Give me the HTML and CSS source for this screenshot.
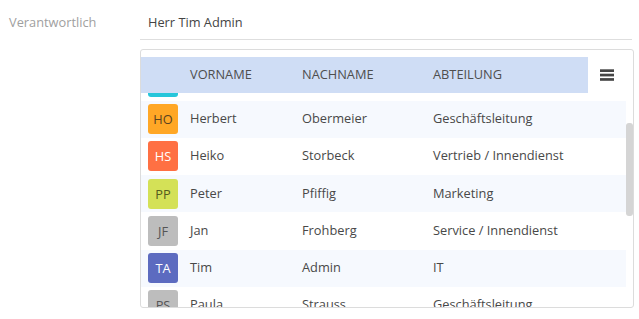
FILE: index.html
```html
<!DOCTYPE html>
<html lang="de">
<head>
<meta charset="utf-8">
<title>Verantwortlich</title>
<link rel="stylesheet" href="styles.css">
</head>
<body>
<div class="field">
  <div class="field-label">Verantwortlich</div>
  <div class="field-main">
    <div class="field-value">Herr Tim Admin</div>
    <div class="grid">
      <div class="grid-head">
        <div class="head-row">
          <div></div>
          <div class="cell">VORNAME</div>
          <div class="cell">NACHNAME</div>
          <div class="cell">ABTEILUNG</div>
        </div>
        <button class="menu" aria-label="Menü">
          <svg width="14" height="12" viewBox="0 0 14 12"><rect x="0" y="0.3" width="14" height="2.7" fill="#454545"/><rect x="0" y="4.7" width="14" height="2.7" fill="#454545"/><rect x="0" y="9.1" width="14" height="2.7" fill="#454545"/></svg>
        </button>
      </div>
      <div class="body-wrap">
        <div class="grid-body" id="gridBody">
          <div class="row"><span class="av av-green">MK</span><span class="cell">Markus</span><span class="cell">Kaiser</span><span class="cell">Vertrieb</span></div>
          <div class="row"><span class="av av-cyan">AB</span><span class="cell">Anna</span><span class="cell">Berger</span><span class="cell">Buchhaltung</span></div>
          <div class="row"><span class="av av-orange">HO</span><span class="cell">Herbert</span><span class="cell">Obermeier</span><span class="cell">Geschäftsleitung</span></div>
          <div class="row"><span class="av av-deep">HS</span><span class="cell">Heiko</span><span class="cell">Storbeck</span><span class="cell">Vertrieb / Innendienst</span></div>
          <div class="row"><span class="av av-lime">PP</span><span class="cell">Peter</span><span class="cell">Pfiffig</span><span class="cell">Marketing</span></div>
          <div class="row"><span class="av av-grey">JF</span><span class="cell">Jan</span><span class="cell">Frohberg</span><span class="cell">Service / Innendienst</span></div>
          <div class="row"><span class="av av-indigo">TA</span><span class="cell">Tim</span><span class="cell">Admin</span><span class="cell">IT</span></div>
          <div class="row"><span class="av av-grey">PS</span><span class="cell">Paula</span><span class="cell">Strauss</span><span class="cell">Geschäftsleitung</span></div>
          <div class="row"><span class="av av-cyan">SL</span><span class="cell">Sabine</span><span class="cell">Lehmann</span><span class="cell">Personal</span></div>
          <div class="row"><span class="av av-orange">KW</span><span class="cell">Klaus</span><span class="cell">Weber</span><span class="cell">Einkauf</span></div>
          <div class="row"><span class="av av-indigo">MS</span><span class="cell">Maria</span><span class="cell">Schulz</span><span class="cell">Marketing</span></div>
          <div class="row"><span class="av av-deep">TF</span><span class="cell">Thomas</span><span class="cell">Fischer</span><span class="cell">Service / Außendienst</span></div>
          <div class="row"><span class="av av-lime">LM</span><span class="cell">Lena</span><span class="cell">Meyer</span><span class="cell">Vertrieb / Außendienst</span></div>
        </div>
        <div class="thumb"></div>
      </div>
    </div>
  </div>
</div>
<script src="script.js"></script>
</body>
</html>
```

FILE: styles.css
```css
* { box-sizing: border-box; }

html, body {
  margin: 0;
  padding: 0;
  background: #ffffff;
}

body {
  font-family: "Open Sans", "Noto Sans", sans-serif;
  font-size: 12.8px;
  color: #484848;
}

.field {
  display: flex;
  align-items: flex-start;
}

.field-label {
  width: 140px;
  flex: 0 0 140px;
  padding: 13px 0 0 9px;
  line-height: 18px;
  color: #a0a0a0;
}

.field-main {
  width: 494px;
  flex: 0 0 494px;
}

.field-value {
  width: 492px;
  padding: 13px 8px 8px;
  line-height: 18px;
  color: #444444;
  border-bottom: 1px solid #dedede;
}

.grid {
  margin-top: 9px;
  height: 259px;
  border: 1px solid #dcdcdc;
  border-radius: 3px;
  padding-top: 7px;
  display: flex;
  flex-direction: column;
  overflow: hidden;
}

.grid-head {
  display: flex;
  align-items: center;
  height: 36px;
  flex: 0 0 36px;
}

.head-row {
  width: 447px;
  height: 100%;
  background: #cfddf5;
  display: grid;
  grid-template-columns: 49px 112px 131px 1fr;
  align-items: center;
  color: #4e4e4e;
}

.cell {
  padding-bottom: 2px;
}

.menu {
  border: 0;
  background: none;
  padding: 0;
  margin: 0 0 0 12px;
  width: 14px;
  height: 12px;
  display: block;
  line-height: 0;
}

.body-wrap {
  flex: 1 1 auto;
  min-height: 0;
  position: relative;
  display: flex;
}

.grid-body {
  width: 485px;
  height: 100%;
  overflow-y: scroll;
  overflow-x: hidden;
  scrollbar-width: none;
}

.grid-body::-webkit-scrollbar {
  display: none;
  width: 0;
}

.thumb {
  position: absolute;
  right: 0;
  top: 30px;
  width: 7px;
  height: 93px;
  background: #d5d5d5;
  border-radius: 3px;
}

.row {
  height: 37.25px;
  display: grid;
  grid-template-columns: 49px 112px 131px 1fr;
  align-items: center;
  white-space: nowrap;
}

.row:nth-child(odd) {
  background: #f6f9fe;
}

.av {
  margin-left: 7px;
  width: 30px;
  height: 30px;
  border-radius: 3px;
  display: flex;
  align-items: center;
  justify-content: center;
  font-size: 12.8px;
  color: #4a4a4a;
}

.av-green { background: #66bb6a; color: #ffffff; }
.av-cyan { background: #26c6da; color: #ffffff; }
.av-orange { background: #ffa726; color: #5a4320; }
.av-deep { background: #ff7043; color: #ffffff; }
.av-lime { background: #d4e157; color: #555a20; }
.av-grey { background: #bdbdbd; color: #555555; }
.av-indigo { background: #5c6bc0; color: #ffffff; }
```

FILE: script.js
```js
document.getElementById('gridBody').scrollTop = 67;
```
